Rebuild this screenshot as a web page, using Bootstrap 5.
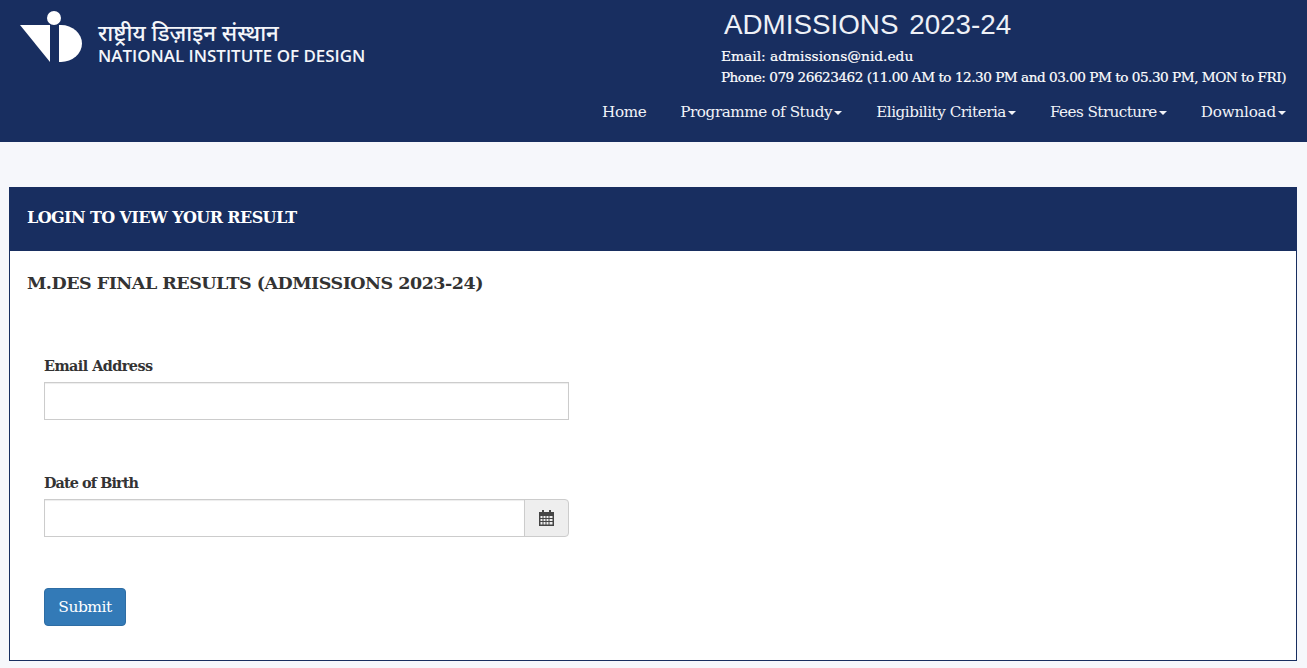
<!DOCTYPE html>
<html lang="en">
<head>
<meta charset="utf-8">
<title>Admissions 2023-24</title>
<link href="https://cdn.jsdelivr.net/npm/bootstrap@5.3.0/dist/css/bootstrap.min.css" rel="stylesheet">
<style>
html,body{height:668px;overflow:hidden}
body{background:#f6f7fb;font-family:"DejaVu Serif","Liberation Serif",serif;color:#333;font-size:14px}
.site-top{background:#182e60;height:142px;padding:0 21px 0 20px}
.logo-box{gap:15px;padding-top:11px}
.logo-words{color:#f4f6fa;padding-top:8px}
.logo-hi{font:500 22.2px/27px "Noto Sans","Noto Sans CJK SC","DejaVu Sans",sans-serif;white-space:nowrap}
.logo-en{font:600 16.95px/20px "Open Sans",sans-serif;white-space:nowrap}
.info-box{color:#fff}
.adm-title{font:400 27.8px/34px "Liberation Sans",sans-serif;margin:8px 0 0 3px;color:#eef1f7;word-spacing:3px;white-space:nowrap}
.adm-line{font-size:13.8px;line-height:22px;white-space:nowrap;-webkit-text-stroke:.2px #fff}
.adm-mail{letter-spacing:-.02px;margin-top:3px}
.adm-phone{font-size:13.6px;letter-spacing:-.49px;margin-top:-1px}
.top-nav{margin-top:12px;gap:34px}
.top-nav .nav-link{padding:0;color:#f1f3f8;font-size:15.2px;letter-spacing:-.42px;line-height:24px}
.top-nav .nav-link.dropdown-toggle::after{margin-left:2px;vertical-align:2px;border-width:4px 4px 0}
.top-nav .nav-link.tight-a{letter-spacing:-.47px}
.top-nav .nav-link.tight-b{letter-spacing:-.55px}
.top-nav .nav-link.loose-a{letter-spacing:-.2px}
.result-card{margin:45px 10px 0 9px;border:1px solid #182e60;border-radius:0;background:#fff;height:474px}
.result-card .card-header{background:#182e60;color:#fff;border:0;border-radius:0;height:63px;padding:0 17px 4px;display:flex;align-items:center;font-weight:700;font-size:16px;letter-spacing:-.6px}
.result-card .card-body{padding:20px 17px 0}
.result-head{font-size:17.5px;font-weight:700;line-height:24px;letter-spacing:-.5px;color:#333;margin:0 0 60px}
.field-wrap{margin-left:17px;width:525px}
.field-wrap .form-label{font-size:14.4px;font-weight:700;line-height:20px;letter-spacing:-.55px;margin-bottom:6px;padding-top:1px;display:block}
.field-wrap .form-label.label-tight{letter-spacing:-.9px}
.field-wrap .form-control{height:38px;border-radius:0;border:1px solid #ccc;box-shadow:inset 0 1px 1px rgba(0,0,0,.075)}
.gap-one{margin-bottom:52px}
.gap-two{margin-bottom:51px}
.field-wrap .input-group-text{width:45px;background:#eee;border:1px solid #ccc;justify-content:center;border-radius:0 4px 4px 0;padding:0}
.go-btn{background:#337ab7;border:1px solid #2e6da4;border-radius:4px;height:38px;width:82px;padding:2px 0 0;color:#fff;font-size:15.5px;letter-spacing:-.5px;font-family:inherit}
</style>
</head>
<body>
<header class="site-top d-flex justify-content-between">
  <div class="logo-box d-flex align-items-start">
    <svg width="63" height="53" viewBox="0 0 63 53" aria-hidden="true"><circle cx="34" cy="7" r="7" fill="#fff"/><path d="M0 14H30V51Z" fill="#fff"/><path d="M39 14H41A21 18.500 0 0 1 62 32.500A21 18.500 0 0 1 41 51H39Z" fill="#fff"/></svg>
    <div class="logo-words">
      <div class="logo-hi">राष्ट्रीय डिज़ाइन संस्थान</div>
      <div class="logo-en">NATIONAL INSTITUTE OF DESIGN</div>
    </div>
  </div>
  <div class="info-box d-flex flex-column align-items-end">
    <div>
      <div class="adm-title">ADMISSIONS 2023-24</div>
      <div class="adm-line adm-mail">Email: admissions@nid.edu</div>
      <div class="adm-line adm-phone">Phone: 079 26623462 (11.00 AM to 12.30 PM and 03.00 PM to 05.30 PM, MON to FRI)</div>
    </div>
    <nav class="nav top-nav">
      <a class="nav-link" href="#">Home</a>
      <a class="nav-link dropdown-toggle" href="#">Programme of Study</a>
      <a class="nav-link dropdown-toggle tight-a" href="#">Eligibility Criteria</a>
      <a class="nav-link dropdown-toggle tight-b" href="#">Fees Structure</a>
      <a class="nav-link dropdown-toggle loose-a" href="#">Download</a>
    </nav>
  </div>
</header>
<main class="card result-card">
  <div class="card-header">LOGIN TO VIEW YOUR RESULT</div>
  <div class="card-body">
    <h1 class="result-head">M.DES FINAL RESULTS (ADMISSIONS 2023-24)</h1>
    <form>
      <div class="field-wrap gap-one">
        <label class="form-label" for="em">Email Address</label>
        <input class="form-control" id="em" type="email">
      </div>
      <div class="field-wrap gap-two">
        <label class="form-label label-tight" for="dob">Date of Birth</label>
        <div class="input-group">
          <input class="form-control" id="dob" type="text">
          <span class="input-group-text"><svg width="15" height="16" viewBox="0 0 15 16" aria-hidden="true"><path fill="#444" fill-rule="evenodd" d="M3 0H5V2H10V0H12V2H15V16H0V2H3ZM1.500 6V8H3.500V6ZM4.500 6V8H6.500V6ZM7.500 6V8H9.500V6ZM10.500 6V8H13.500V6ZM1.500 9V11H3.500V9ZM4.500 9V11H6.500V9ZM7.500 9V11H9.500V9ZM10.500 9V11H13.500V9ZM1.500 12V14.500H3.500V12ZM4.500 12V14.500H6.500V12ZM7.500 12V14.500H9.500V12ZM10.500 12V14.500H13.500V12Z"/></svg></span>
        </div>
      </div>
      <div class="field-wrap"><button class="btn btn-primary go-btn" type="button">Submit</button></div>
    </form>
  </div>
</main>
<script src="https://cdn.jsdelivr.net/npm/bootstrap@5.3.0/dist/js/bootstrap.bundle.min.js"></script>
</body>
</html>
